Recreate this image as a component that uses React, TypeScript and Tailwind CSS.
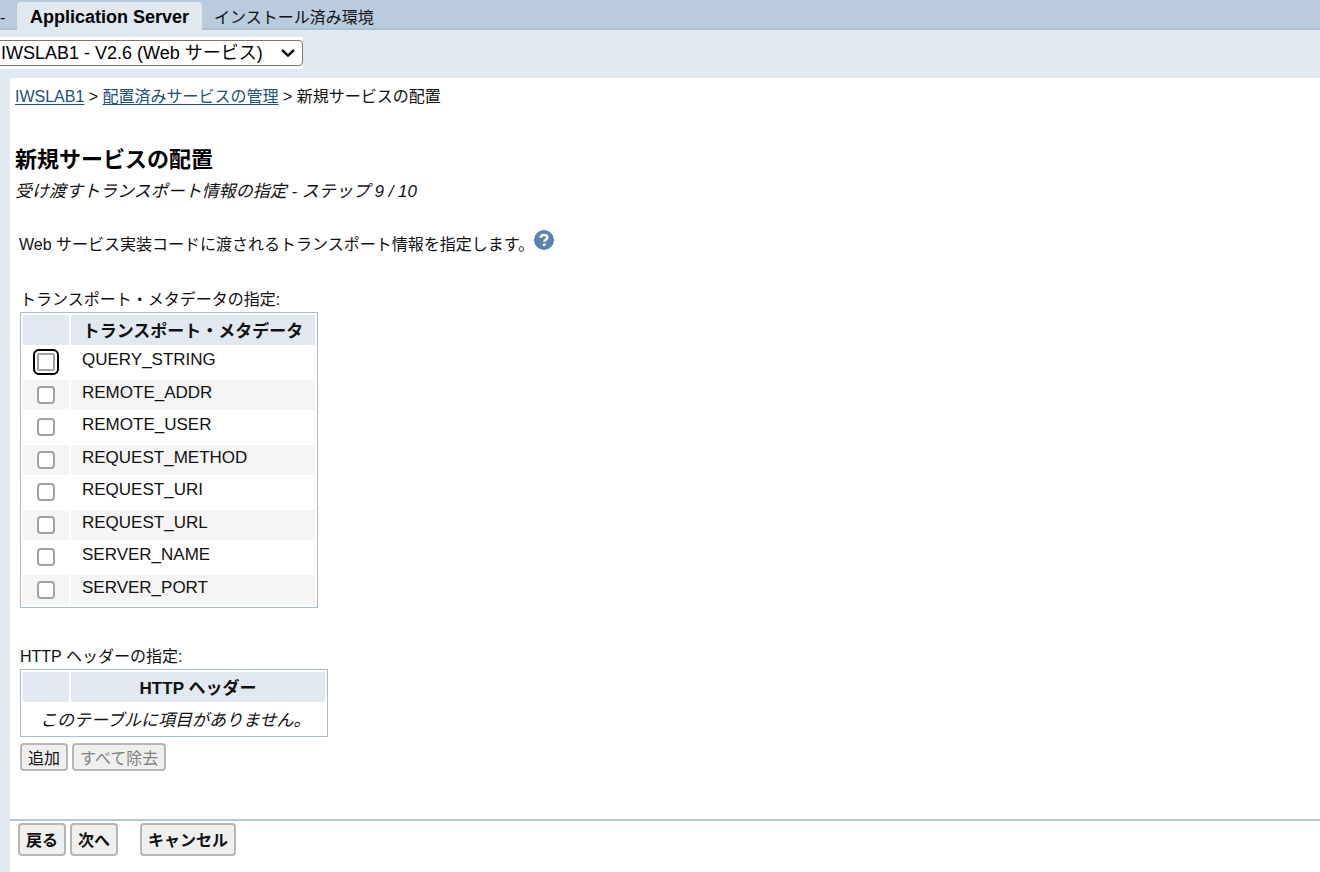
/**
 * 新規サービスの配置ウィザード
 * トランスポート情報の指定 (ステップ 9 / 10)
 */

import { useState } from 'react';

const METADATA = [
  'QUERY_STRING',
  'REMOTE_ADDR',
  'REMOTE_USER',
  'REQUEST_METHOD',
  'REQUEST_URI',
  'REQUEST_URL',
  'SERVER_NAME',
  'SERVER_PORT',
];

const LINK_CLASS = 'text-[#21507c] underline underline-offset-2';

const BUTTON_CLASS =
  'rounded border-2 border-[#b6b6b6] bg-[#efefef] px-[6px] pt-[2px] text-base';

/**
 * 上部のタブ
 */
function TabBar() {
  return (
    <nav className="flex h-[30px] items-end border-b-2 border-[#adc0d2] bg-[#b9cbdd] text-base">
      <a href="#manage" className="w-[6px] leading-5">
        -
      </a>
      <a
        href="#server"
        aria-current="page"
        className="-mb-[2px] ml-[11px] h-[28px] rounded-t bg-[#e1e8f0] px-[13px] text-lg leading-[30px] font-bold text-black"
      >
        Application Server
      </a>
      <a href="#installed" className="ml-3 leading-5">
        インストール済み環境
      </a>
    </nav>
  );
}

/**
 * サーバー選択
 */
function ServerSelect() {
  return (
    <div className="flex h-12 items-start pt-[7px]">
      <div className="relative -ml-1 bg-white py-[3px]">
        <select
          aria-label="サーバー"
          className="block h-[26px] w-[307px] appearance-none rounded-sm border border-[#767676] bg-white pl-1 text-lg leading-6 text-black"
        >
          <option>IWSLAB1 - V2.6 (Web サービス)</option>
        </select>
        <svg
          viewBox="0 0 16 10"
          className="pointer-events-none absolute top-[11px] right-[7px] h-[10px] w-4"
          fill="none"
          stroke="#111"
          strokeWidth="2.4"
        >
          <path d="M2 2l6 5.6L14 2" />
        </svg>
      </div>
    </div>
  );
}

function HelpIcon() {
  return (
    <svg viewBox="0 0 22 22" className="h-[22px] w-[22px]" aria-hidden="true">
      <circle cx="11" cy="11" r="10" fill="#5b83ad" />
      <path
        d="M7.7 8.8C7.8 6.9 9.2 6 11 6c1.9 0 3.3 1 3.3 2.6 0 2.1-2.9 2.2-2.9 4.2"
        fill="none"
        stroke="#fff"
        strokeWidth="2.5"
      />
      <circle cx="11.3" cy="15.8" r="1.5" fill="#fff" />
    </svg>
  );
}

/**
 * トランスポート・メタデータの表
 */
function MetadataTable() {
  const [checked, setChecked] = useState<string[]>([]);

  const toggle = (name: string) => {
    setChecked((prev) =>
      prev.includes(name) ? prev.filter((n) => n !== name) : [...prev, name]
    );
  };

  return (
    <table
      aria-labelledby="metadata-label"
      className="border-separate border-spacing-[2px] border border-[#a9bccd] text-[17px] leading-6"
    >
      <thead>
        <tr className="h-[30px] bg-[#e1e8f0]">
          <th className="w-[46px] p-0" />
          <th className="w-[244px] p-0 pt-1">トランスポート・メタデータ</th>
        </tr>
      </thead>
      <tbody>
        {METADATA.map((name) => (
          <tr key={name} className="h-[31px] even:h-[30px] even:bg-[#f5f5f5]">
            <td className="p-0 pt-[6px] align-top">
              <input
                id={name}
                type="checkbox"
                autoFocus={name === METADATA[0]}
                checked={checked.includes(name)}
                onChange={() => toggle(name)}
                className="mx-auto block h-[18px] w-[18px] appearance-none rounded border-2 border-[#a2a2a2] bg-white checked:bg-[#0075ff] focus:rounded-xs focus:outline-2 focus:outline-offset-2 focus:outline-black"
              />
            </td>
            <td className="p-0 pl-[11px] align-top">
              <label htmlFor={name} className="block leading-[26px]">
                {name}
              </label>
            </td>
          </tr>
        ))}
      </tbody>
    </table>
  );
}

/**
 * HTTP ヘッダーの表
 */
function HeaderTable() {
  return (
    <table
      aria-labelledby="header-label"
      className="border-separate border-spacing-[2px] border border-[#a9bccd] text-[17px] leading-6"
    >
      <thead>
        <tr className="h-[30px] bg-[#e1e8f0]">
          <th className="w-[46px] p-0" />
          <th className="w-[254px] p-0 pt-1">HTTP ヘッダー</th>
        </tr>
      </thead>
      <tbody>
        <tr className="h-[30px]">
          <td colSpan={2} className="p-0 pt-1 pl-[17px] italic">
            このテーブルに項目がありません。
          </td>
        </tr>
      </tbody>
    </table>
  );
}

export default function App() {
  return (
    <div className="flex min-h-screen flex-col bg-[#e1e8f0] font-['Liberation_Sans','Noto_Sans_CJK_JP',sans-serif] text-base text-[#111]">
      <TabBar />
      <ServerSelect />

      <main className="ml-[10px] grow bg-white pt-[7px]">
        <div className="px-[5px]">
          <nav className="leading-6">
            <a href="#iwslab1" className={LINK_CLASS}>
              IWSLAB1
            </a>
            {' > '}
            <a href="#services" className={LINK_CLASS}>
              配置済みサービスの管理
            </a>
            {' > '}新規サービスの配置
          </nav>
          <h1 className="mt-[35px] text-[22px] leading-8 font-bold text-black">新規サービスの配置</h1>
          <p className="mt-1 text-[17px] leading-6 italic">
            受け渡すトランスポート情報の指定 - ステップ 9 / 10
          </p>
        </div>

        <div className="px-[9px]">
          <div className="mt-[25px] flex items-start">
            <p className="pt-1 leading-6">
              Web サービス実装コードに渡されるトランスポート情報を指定します。
            </p>
            <button type="button" aria-label="ヘルプ" className="-ml-px">
              <HelpIcon />
            </button>
          </div>
        </div>

        <div className="px-[10px]">
          <p id="metadata-label" className="mt-[31px] leading-6">
            トランスポート・メタデータの指定:
          </p>
          <MetadataTable />

          <p id="header-label" className="mt-[37px] leading-6">
            HTTP ヘッダーの指定:
          </p>
          <HeaderTable />
          <div className="mt-[6px] flex gap-1">
            <button type="button" className={`${BUTTON_CLASS} h-7`}>
              追加
            </button>
            <button type="button" disabled className={`${BUTTON_CLASS} h-7 text-[#808080]`}>
              すべて除去
            </button>
          </div>
        </div>

        <div className="mt-12 flex gap-1 border-t-2 border-[#b5c6d6] px-2 pt-[2px]">
          <button type="button" className={`${BUTTON_CLASS} h-[33px] font-bold`}>
            戻る
          </button>
          <button type="button" className={`${BUTTON_CLASS} h-[33px] font-bold`}>
            次へ
          </button>
          <button type="button" className={`${BUTTON_CLASS} ml-[18px] h-[33px] font-bold`}>
            キャンセル
          </button>
        </div>
      </main>
    </div>
  );
}
